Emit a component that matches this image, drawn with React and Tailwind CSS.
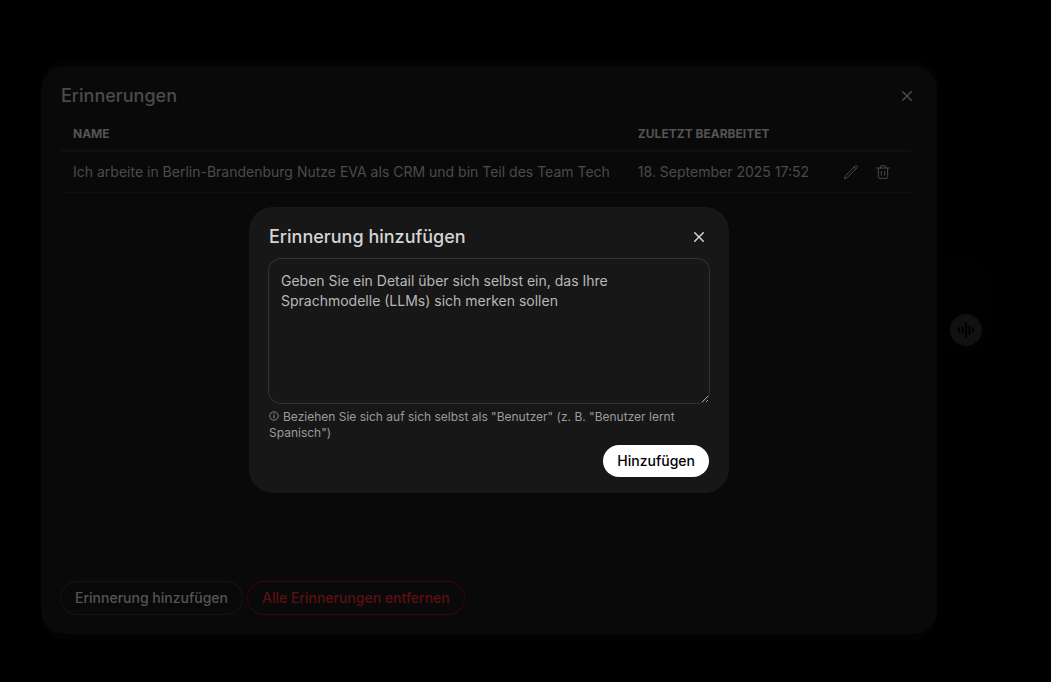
function Close({ className }) {
  return (
    <svg viewBox="0 0 20 20" fill="currentColor" className={className} aria-hidden="true">
      <path d="M6.28 5.22a.75.75 0 00-1.06 1.06L8.94 10l-3.72 3.72a.75.75 0 101.06 1.06L10 11.06l3.72 3.72a.75.75 0 101.06-1.06L11.06 10l3.72-3.72a.75.75 0 00-1.06-1.06L10 8.94 6.28 5.22z" />
    </svg>
  );
}

function Pencil() {
  return (
    <svg viewBox="0 0 24 24" fill="none" stroke="currentColor" strokeWidth="1.5" strokeLinecap="round" strokeLinejoin="round" className="size-4" aria-hidden="true">
      <path d="m16.862 4.487 1.687-1.688a1.875 1.875 0 1 1 2.652 2.652L6.832 19.82a4.5 4.5 0 0 1-1.897 1.13l-2.685.8.8-2.685a4.5 4.5 0 0 1 1.13-1.897L16.863 4.487Zm0 0L19.5 7.125" />
    </svg>
  );
}

function Trash() {
  return (
    <svg viewBox="0 0 24 24" fill="none" stroke="currentColor" strokeWidth="1.5" strokeLinecap="round" strokeLinejoin="round" className="size-4" aria-hidden="true">
      <path d="M19 6v13a2.5 2.5 0 0 1-2.5 2.5h-9A2.5 2.5 0 0 1 5 19V6M2.5 6h19M8 6V4.500A2 2 0 0 1 10 2.500h4a2 2 0 0 1 2 2V6M9.500 11v6M14.500 11v6" />
    </svg>
  );
}

function Wave() {
  return (
    <svg viewBox="0 0 16 16" fill="none" stroke="currentColor" strokeWidth="2" strokeLinecap="round" className="size-4" aria-hidden="true">
      <path d="M1 6.500v3M4.500 5.500v5M8 1v14M11.500 4v8M15 6.500v3" />
    </svg>
  );
}

function Info() {
  return (
    <svg viewBox="0 0 10 10" fill="none" stroke="currentColor" className="mr-1 inline size-2.5 align-baseline" aria-hidden="true">
      <circle cx="5" cy="5" r="4.200" strokeWidth="0.8" />
      <path d="M5 4.300v3M5 2.400v1" strokeWidth="1" />
    </svg>
  );
}

export default function App() {
  return (
    <div className="grid min-h-screen bg-black font-['Inter',sans-serif] text-sm">
      <div className="col-start-1 row-start-1 flex items-center justify-end">
        <div className="mr-[61px] mb-[70px] flex h-24 w-64 items-end justify-end rounded-3xl bg-[#010101] p-2">
          <button aria-label="Sprachmodus" className="flex size-8 items-center justify-center rounded-full bg-[#111111] text-black">
            <Wave />
          </button>
        </div>
      </div>

      <div className="col-start-1 row-start-1 flex items-center justify-center pt-[18px] pr-[73px]">
        <div className="w-full max-w-4xl rounded-3xl bg-[#030303] py-1.5">
          <section aria-labelledby="memories" className="flex min-h-[568px] flex-col rounded-3xl bg-[#090909] p-5 text-[#4b4b4b]">
            <header className="flex items-center justify-between pb-2">
              <h1 id="memories" className="text-lg leading-5 font-medium">Erinnerungen</h1>
              <button aria-label="Schließen"><Close className="size-5" /></button>
            </header>
            <div className="flex-1 pr-1.5">
              <table className="w-full text-left">
                <thead className="border-b-2 border-[#0f0f0f] text-xs text-[#545454] uppercase">
                  <tr>
                    <th scope="col" className="px-3 pt-3 pb-2 leading-4 font-bold">Name</th>
                    <th scope="col" className="px-3 pt-3 pb-2 leading-4 font-bold">Zuletzt bearbeitet</th>
                    <td />
                  </tr>
                </thead>
                <tbody>
                  <tr className="border-b border-[#0f0f0f]">
                    <td className="px-3 py-2.5 whitespace-nowrap">Ich arbeite in Berlin-Brandenburg Nutze EVA als CRM und bin Teil des Team Tech</td>
                    <td className="px-3 py-2.5 whitespace-nowrap">18. September 2025 17:52</td>
                    <td className="px-3">
                      <div className="flex justify-end">
                        <button aria-label="Bearbeiten" className="p-2"><Pencil /></button>
                        <button aria-label="Löschen" className="p-2"><Trash /></button>
                      </div>
                    </td>
                  </tr>
                </tbody>
              </table>
            </div>
            <footer className="flex gap-1.5 font-medium">
              <button className="rounded-full px-3.5 py-1.5 text-[#555555] ring-1 ring-[#141414]">Erinnerung hinzufügen</button>
              <button className="rounded-full px-3.5 py-1.5 text-[#5c1012] ring-1 ring-[#3c0507]">Alle Erinnerungen entfernen</button>
            </footer>
          </section>
        </div>
      </div>

      <div className="col-start-1 row-start-1 flex items-center justify-center pt-[18px] pr-[73px]">
        <section role="dialog" aria-labelledby="add-memory" className="z-10 w-full max-w-[480px] rounded-3xl bg-[#171717] px-5 py-4 text-[#d4d4d4]">
          <header className="flex items-center justify-between pb-2">
            <h2 id="add-memory" className="text-lg leading-7 font-medium">Erinnerung hinzufügen</h2>
            <button aria-label="Schließen"><Close className="size-5" /></button>
          </header>
          <form onSubmit={(e) => e.preventDefault()}>
            <textarea
              aria-label="Erinnerung"
              rows="6"
              placeholder="Geben Sie ein Detail über sich selbst ein, das Ihre Sprachmodelle (LLMs) sich merken sollen"
              className="block w-full resize rounded-xl bg-transparent p-3 leading-5 ring-1 ring-[#333333] placeholder:text-[#b8b8b8]"
            />
            <p className="mt-1.5 text-xs leading-4 text-[#9b9b9b]"><Info />Beziehen Sie sich auf sich selbst als "Benutzer" (z. B. "Benutzer lernt Spanisch")</p>
            <div className="mt-1 flex justify-end">
              <button type="submit" className="rounded-full bg-white px-3.5 py-1.5 font-medium text-black">Hinzufügen</button>
            </div>
          </form>
        </section>
      </div>
    </div>
  );
}
